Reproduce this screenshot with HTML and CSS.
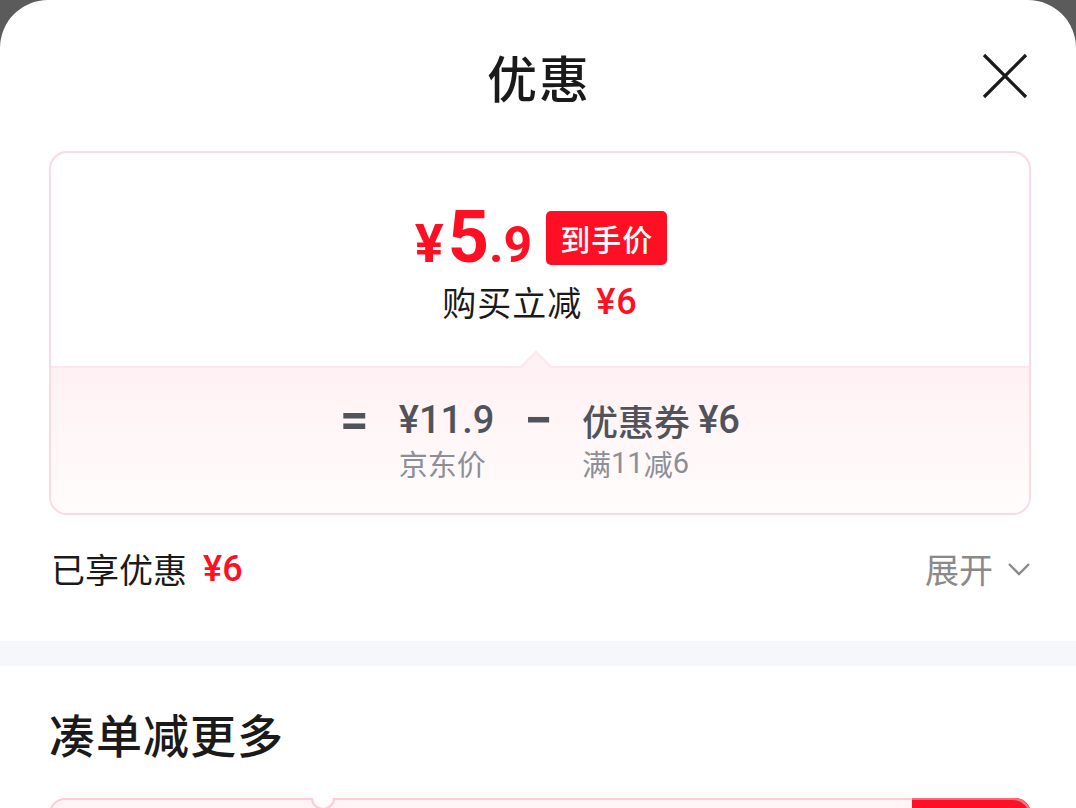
FILE: index.html
```html
<!DOCTYPE html>
<html lang="zh-CN">
<head>
<meta charset="utf-8">
<title>优惠</title>
<link rel="stylesheet" href="styles.css">
</head>
<body>
<div class="sheet">
  <header class="header">
    <span></span>
    <h1 class="title">优惠</h1>
    <button class="close" aria-label="关闭">
      <svg width="48" height="48" viewBox="0 0 48 48"><path d="M3 3 L45 45 M45 3 L3 45" stroke="#1a1a1a" stroke-width="3.2" fill="none"/></svg>
    </button>
  </header>

  <div class="section">
    <div class="card">
      <div class="card-top">
        <div class="price-row">
          <span class="price"><span class="yen">¥</span><span class="int">5</span><span class="dec">.9</span></span>
          <span class="badge">到手价</span>
        </div>
        <div class="save">购买立减<span class="red">¥6</span></div>
      </div>
      <div class="card-bottom">
        <span class="notch"></span>
        <div class="formula">
          <span class="op">=</span>
          <div class="term">
            <div class="main num">¥11.9</div>
            <div class="sub">京东价</div>
          </div>
          <span class="op">−</span>
          <div class="term">
            <div class="main">优惠券&nbsp;<span class="num">¥6</span></div>
            <div class="sub">满<span class="snum">11</span>减<span class="snum">6</span></div>
          </div>
        </div>
      </div>
    </div>

    <div class="enjoy">
      <div class="enjoy-left">已享优惠<span class="red">¥6</span></div>
      <div class="expand">展开
        <svg width="24" height="14" viewBox="0 0 24 14"><path d="M2 2 L12 12 L22 2" stroke="#8a8a8a" stroke-width="2.4" fill="none"/></svg>
      </div>
    </div>
  </div>

  <div class="band"></div>

  <div class="section">
    <h2 class="more">凑单减更多</h2>
    <div class="ticket">
      <div class="ticket-left"></div>
      <div class="ticket-mid"></div>
      <div class="ticket-red"></div>
      <span class="ticket-notch"></span>
    </div>
  </div>
</div>
</body>
</html>
```

FILE: styles.css
```css
* { box-sizing: border-box; margin: 0; padding: 0; }
html, body { width: 1076px; height: 808px; overflow: hidden; }
body {
  background: #5b5b5b;
  font-family: "Noto Sans CJK SC", "Noto Sans", sans-serif;
  color: #1a1a1a;
}
.sheet {
  background: #fff;
  height: 808px;
  border-radius: 48px 48px 0 0;
  overflow: hidden;
}
.header {
  height: 151px;
  display: grid;
  grid-template-columns: 1fr auto 1fr;
  align-items: center;
  padding: 0 48px 0 48px;
}
.title {
  font-size: 50px;
  font-weight: 500;
  line-height: 60px;
  letter-spacing: 2px;
  margin-left: 2px;
}
.close {
  justify-self: end;
  border: none;
  background: none;
  width: 48px;
  height: 48px;
  margin-right: -1px;
}
.close svg { display: block; }

.section { padding: 0 45px 0 49px; }

.card {
  border: 2px solid #fdd9e2;
  border-radius: 18px;
  overflow: hidden;
}
.card-top {
  height: 213px;
  padding-top: 55px;
  display: flex;
  flex-direction: column;
  align-items: center;
  gap: 14px;
}
.price-row {
  display: flex;
  align-items: center;
  height: 60px;
  gap: 14px;
  padding-left: 2px;
}
.price {
  color: #ff0f23;
  font-family: Roboto, "Noto Sans", sans-serif;
  font-weight: 700;
  display: flex;
  align-items: baseline;
  height: 60px;
  line-height: 60px;
}
.yen { font-size: 54px; margin-right: 4px; }
.int { font-size: 72px; }
.dec { font-size: 50px; }
.badge {
  background: #ff0f23;
  color: #fff;
  font-size: 30px;
  font-weight: 500;
  height: 54px;
  line-height: 54px;
  padding: 0 14px;
  border-radius: 5px;
  letter-spacing: 1px;
}
.save {
  height: 40px;
  font-size: 34px;
  line-height: 40px;
  font-weight: 400;
  letter-spacing: 1px;
  display: flex;
  align-items: center;
  gap: 14px;
}
.red {
  color: #ff0f23;
  font-family: Roboto, "Noto Sans", sans-serif;
  font-weight: 500;
  font-size: 36px;
  line-height: 40px;
}

.card-bottom {
  position: relative;
  height: 147px;
  border-top: 2px solid #fde6ec;
  background: linear-gradient(#fff1f4, #fffcfc);
  padding-top: 30px;
  display: flex;
  justify-content: center;
}
.notch {
  position: absolute;
  left: 474px;
  top: -13px;
  width: 22px;
  height: 22px;
  transform: rotate(45deg);
  background: #fff1f4;
  border-top: 2px solid #fde6ec;
  border-left: 2px solid #fde6ec;
}
.formula {
  display: flex;
  gap: 30px;
  align-items: flex-start;
}
.op {
  height: 44px;
  font-size: 50px;
  line-height: 44px;
  color: #50535a;
  font-weight: 700;
  font-family: Roboto, "Noto Sans", sans-serif;
}
.main {
  height: 44px;
  display: flex;
  align-items: center;
  font-size: 36px;
  line-height: 44px;
  color: #50535a;
  font-weight: 500;
  white-space: nowrap;
}
.num {
  font-family: Roboto, "Noto Sans", sans-serif;
  font-weight: 500;
}
.main.num, .main .num { font-size: 38px; }
.snum {
  font-family: Roboto, "Noto Sans", sans-serif;
  font-weight: 400;
}
.sub {
  height: 34px;
  display: flex;
  align-items: center;
  margin-top: 4px;
  font-size: 29px;
  line-height: 34px;
  color: #8c8f96;
}

.enjoy {
  height: 126px;
  display: flex;
  justify-content: space-between;
  align-items: flex-start;
  padding: 34px 0 0 2px;
}
.enjoy-left {
  height: 40px;
  font-size: 34px;
  line-height: 40px;
  display: flex;
  align-items: center;
  gap: 16px;
}
.expand {
  height: 40px;
  font-size: 34px;
  line-height: 40px;
  color: #8a8a8a;
  display: flex;
  align-items: center;
  gap: 14px;
}

.band { height: 25px; background: #f6f7fb; }

.more {
  margin-top: 37px;
  height: 60px;
  font-size: 46px;
  line-height: 60px;
  font-weight: 500;
  letter-spacing: 1px;
}
.ticket {
  position: relative;
  margin-top: 35px;
  display: flex;
  height: 160px;
}
.ticket-left {
  width: 264px;
  border: 2px solid #ffc9d6;
  border-right: none;
  border-radius: 16px 0 0 0;
  background: #fff5f7;
}
.ticket-mid {
  flex: 1;
  margin-left: 20px;
  border: 2px solid #ffc9d6;
  border-left: none;
  border-right: none;
  background: #fff5f7;
}
.ticket-red {
  width: 119px;
  background: #ff0f23;
  border-radius: 0 16px 0 0;
  box-shadow: inset -2px 2px 0 #ff6b7a;
}
.ticket-notch {
  position: absolute;
  left: 262px;
  top: 0;
  width: 24px;
  height: 12px;
  border-radius: 0 0 12px 12px;
  background: #fff;
  border: 2px solid #ffc9d6;
  border-top: none;
}
```
